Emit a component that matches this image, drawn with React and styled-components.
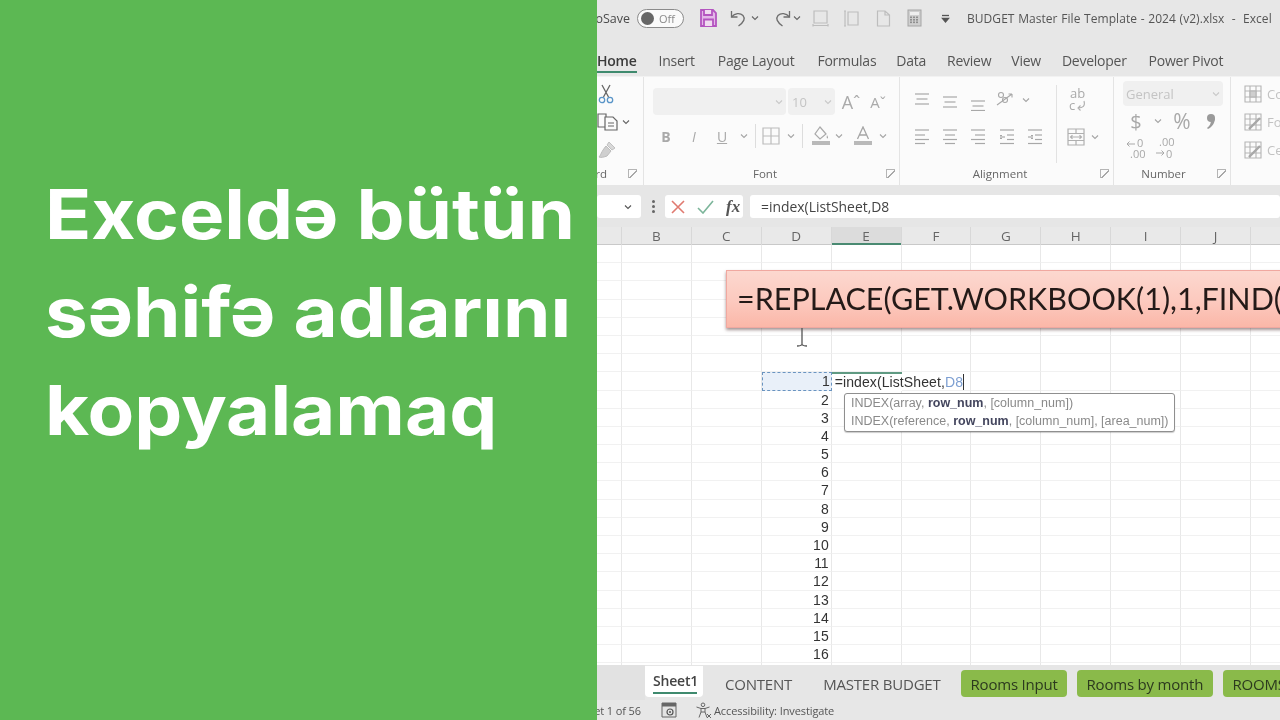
import React from "react";
import styled, { createGlobalStyle } from "styled-components";

const Global = createGlobalStyle`
  html, body { margin: 0; padding: 0; width: 1280px; height: 720px; overflow: hidden; background: #fff; }
  #root { width: 1280px; height: 720px; }
`;

const Page = styled.div`
  display: flex;
  width: 1280px;
  height: 720px;
  overflow: hidden;
`;
const Cover = styled.section`
  width: 597px;
  flex: none;
  background: #5cb853;
  padding: 165px 0 0 45px;
  box-sizing: border-box;
  overflow: hidden;
`;
const Heading = styled.h1`
  margin: 0;
  color: #fff;
  font-family: Inter, "Noto Sans", sans-serif;
  font-weight: 700;
  font-size: 69px;
  line-height: 98px;
  letter-spacing: 0;
  white-space: nowrap;
  transform: scaleX(1.105);
  transform-origin: left center;
`;
const Excel = styled.section`
  position: relative;
  width: 683px;
  height: 720px;
  flex: none;
  display: flex;
  flex-direction: column;
  overflow: hidden;
  background: #e7e7e7;
  color: #4a4a4a;
  font-family: "Open Sans", "Noto Sans", sans-serif;
  filter: blur(0.4px);
`;
const TitleBar = styled.div`
  height: 36px;
  flex: none;
  display: flex;
  align-items: center;
  font-size: 12.5px;
  white-space: nowrap;
`;
const ClipEnd = styled.div`
  width: ${p => p.$w}px;
  flex: none;
  display: flex;
  justify-content: flex-end;
  overflow: hidden;
  white-space: nowrap;
  color: ${p => p.$c || "inherit"};
`;
const Toggle = styled.div`
  margin-left: 7px;
  width: 47px;
  height: 19px;
  box-sizing: border-box;
  border: 1.5px solid #8b8b8b;
  border-radius: 10px;
  background: #fafafa;
  display: flex;
  align-items: center;
  gap: 5px;
  padding-left: 3px;
  font-size: 11px;
  color: #8a8a8a;
`;
const Knob = styled.span`
  width: 13px;
  height: 13px;
  border-radius: 50%;
  background: #666;
`;
const Tool = styled.div`
  width: ${p => p.$w}px;
  height: 100%;
  flex: none;
  margin-left: ${p => p.$ml || 0}px;
  display: flex;
  align-items: center;
  justify-content: center;
  color: ${p => p.$c || "#a9a9a9"};
  font-size: ${p => p.$fs || 14}px;
  font-weight: ${p => p.$fw || 400};
  font-style: ${p => p.$it ? "italic" : "normal"};
  text-decoration: ${p => p.$un ? "underline" : "none"};
`;
const TitleText = styled.span`
  margin-left: 17px;
  font-size: 12px;
  letter-spacing: 0.05px;
  color: #555;
  word-spacing: 0.5px;
  white-space: pre;
`;
const TabBar = styled.nav`
  height: 40px;
  flex: none;
  display: flex;
  align-items: flex-start;
  padding-top: 14px;
  box-sizing: border-box;
  font-size: 14px;
  letter-spacing: -0.25px;
  color: #555;
`;
const MenuTab = styled.span`
  flex: none;
  margin-left: ${p => p.$ml || 0}px;
  height: 21px;
  line-height: 21px;
  font-weight: ${p => p.$on ? 600 : 400};
  color: ${p => p.$on ? "#3b3b3b" : "#555"};
  border-bottom: ${p => p.$on ? "2px solid #3f8a6e" : "none"};
`;
const Ribbon = styled.div`
  height: 109px;
  flex: none;
  display: flex;
  background: #fbfbfb;
  border-top: 1px solid #f2f2f2;
  box-sizing: border-box;
  overflow: hidden;
`;
const Group = styled.div`
  position: relative;
  width: ${p => p.$w}px;
  flex: none;
  box-sizing: border-box;
  padding-top: ${p => p.$pt || 0}px;
  display: flex;
  flex-direction: column;
  gap: ${p => p.$gap || 0}px;
  border-right: ${p => p.$open ? "none" : "1px solid #e4e4e4"};
`;
const Row = styled.div`
  height: ${p => p.$h}px;
  flex: none;
  display: flex;
  padding-left: ${p => p.$pl || 0}px;
`;
const SelectBox = styled.div`
  width: ${p => p.$w}px;
  margin-left: ${p => p.$ml || 0}px;
  flex: none;
  box-sizing: border-box;
  background: #f0f0f0;
  border-radius: 4px;
  display: flex;
  align-items: center;
  justify-content: space-between;
  padding: 0 3px 0 ${p => p.$pl || 3}px;
  font-size: 13px;
  color: #c4c4c4;
`;
const GroupFoot = styled.div`
  margin-top: auto;
  height: 21px;
  flex: none;
  display: flex;
  align-items: center;
  font-size: 11.5px;
  color: #666;
  padding-bottom: 2px;
  box-sizing: border-box;
`;
const FootLabel = styled.span`
  flex: 1;
  text-align: center;
  padding-right: ${p => p.$pr || 0}px;
`;
const Launcher = styled.div`
  width: 9px;
  height: 9px;
  flex: none;
  margin-right: ${p => p.$mr || 4}px;
  border-left: 1px solid #b5b5b5;
  border-top: 1px solid #b5b5b5;
  box-sizing: border-box;
  display: flex;
  background: linear-gradient(135deg, transparent 45%, #a8a8a8 45%, #a8a8a8 60%, transparent 60%);
`;
const SplitGroup = styled.div`
  width: 214px;
  flex: none;
  position: relative;
  display: flex;
  flex-direction: column;
  box-sizing: border-box;
  border-right: 1px solid #e4e4e4;
`;
const SplitBody = styled.div`
  display: flex;
  height: 78px;
  padding-top: 8px;
  flex: none;
`;
const SplitCol = styled.div`
  width: ${p => p.$w}px;
  flex: none;
  display: flex;
  flex-direction: column;
  gap: 7px;
  border-right: ${p => p.$line ? "1px solid #e2e2e2" : "none"};
`;
const StyleItem = styled.div`
  height: 27px;
  flex: none;
  display: flex;
  align-items: center;
  gap: 5px;
  padding-left: 13px;
  font-size: 13px;
  color: #c2c2c2;
  white-space: nowrap;
`;
const FormulaRow = styled.div`
  height: 42px;
  flex: none;
  display: flex;
  padding-top: 10px;
  box-sizing: border-box;
  background: #e6e6e6;
`;
const WhiteBox = styled.div`
  height: 23px;
  width: ${p => p.$w ? `${p.$w}px` : "auto"};
  flex: ${p => p.$w ? "none" : 1};
  margin-left: ${p => p.$ml || 0}px;
  background: #fff;
  border-radius: 3px;
  display: flex;
  align-items: center;
  box-sizing: border-box;
  padding-left: ${p => p.$pl || 0}px;
  font-size: 13.9px;
  color: #444;
`;
const Dots = styled.div`
  margin-left: 11px;
  width: 3px;
  display: flex;
  flex-direction: column;
  justify-content: center;
  gap: 2px;
  height: 23px;
`;
const Dot = styled.span`
  width: 3px;
  height: 3px;
  border-radius: 50%;
  background: #666;
`;
const Fx = styled.span`
  font-family: "Liberation Serif", serif;
  font-style: italic;
  font-weight: 700;
  font-size: 17px;
  color: #555;
  margin-left: 12px;
`;
const ColumnHeads = styled.div`
  height: 18px;
  flex: none;
  display: grid;
  grid-template-columns: 25px repeat(10, 69.9px);
  background: #e9e9e9;
  border-bottom: 1px solid #c9c9c9;
  box-sizing: border-box;
`;
const ColHead = styled.div`
  text-align: center;
  line-height: 18px;
  font-size: 13.5px;
  color: #666;
  background: ${p => p.$on ? "#dcdcdc" : "transparent"};
  border-right: 1px solid #d8d8d8;
  box-shadow: ${p => p.$on ? "inset 0 -2px 0 #4a8a72" : "none"};
`;
const Sheet = styled.div`
  flex: 1;
  min-height: 0;
  overflow: hidden;
  background: #fff;
  display: grid;
  grid-template-columns: 25px repeat(10, 69.9px);
  grid-auto-rows: 18.2px;
`;
const Cell = styled.div`
  box-sizing: border-box;
  border-right: 1px solid #e8e8e8;
  border-bottom: 1px solid #f1f1f1;
  font-family: "Liberation Sans", Arial, sans-serif;
  font-size: 14px;
  line-height: 19px;
  color: #333;
  text-align: right;
  padding-right: 2px;
  white-space: nowrap;
`;
const CopiedCell = styled(Cell)`
  border: 1.5px dashed #6a94c0;
  background: #e9f0f9;
  line-height: 16px;
  padding-right: 1px;
`;
const EditCell = styled(Cell)`
  position: relative;
  z-index: 1;
  text-align: left;
  padding-left: 3px;
  border-top: 2px solid #5f9a82;
  border-bottom: none;
  border-right: none;
  line-height: 17px;
  overflow: visible;
  letter-spacing: 0.1px;
`;
const RefText = styled.span`
  color: #7d9fd2;
  border-right: 1px solid #333;
`;
const SheetTabs = styled.div`
  height: 35px;
  flex: none;
  display: flex;
  align-items: flex-start;
  background: #e6e6e6;
  font-size: 15px;
  color: #555;
  white-space: nowrap;
  letter-spacing: -0.2px;
`;
const TabGutter = styled.div`
  width: 48px;
  height: 35px;
  flex: none;
  background: #e2e2e2;
`;
const ActiveTab = styled.div`
  width: 58px;
  height: 31px;
  flex: none;
  margin-top: 1px;
  background: #fff;
  border-radius: 0 0 4px 4px;
  box-sizing: border-box;
  padding: 6px 6px 0 8px;
  font-weight: 600;
  color: #444;
  font-size: 14px;
`;
const ActiveInner = styled.div`
  height: 20px;
  line-height: 18px;
  border-bottom: 2px solid #3f8a6e;
`;
const PlainTab = styled.div`
  flex: none;
  margin-left: ${p => p.$ml}px;
  height: 35px;
  line-height: 39px;
`;
const GreenTab = styled.div`
  flex: none;
  width: ${p => p.$w}px;
  margin: 5px 0 0 ${p => p.$ml}px;
  height: 27px;
  line-height: 28px;
  background: #8aba4a;
  border-radius: 4px;
  box-sizing: border-box;
  padding-left: 10px;
  color: #2c3a1e;
`;
const StatusBar = styled.footer`
  height: 20px;
  flex: none;
  display: flex;
  align-items: center;
  font-size: 11px;
  letter-spacing: -0.1px;
  color: #555;
  white-space: nowrap;
`;
const StatusIcon = styled.div`
  flex: none;
  margin-left: ${p => p.$ml}px;
  display: flex;
`;
const Callout = styled.div`
  position: absolute;
  left: 129px;
  top: 270px;
  width: 640px;
  height: 58px;
  box-sizing: border-box;
  padding-left: 10px;
  background: linear-gradient(180deg, #fcd8cf 0%, #fcc9be 55%, #fbb7a8 100%);
  border: 1px solid #f0a8a0;
  box-shadow: 0 2px 3px rgba(90, 60, 60, 0.55);
  font-family: Lato, "Open Sans", sans-serif;
  font-size: 30.5px;
  line-height: 54px;
  color: #241a18;
  white-space: nowrap;
`;
const Hint = styled.div`
  position: absolute;
  left: 247px;
  top: 393px;
  width: 331px;
  height: 39px;
  box-sizing: border-box;
  background: #fff;
  border: 1px solid #8f8f8f;
  border-radius: 3px;
  box-shadow: 0 1px 1px rgba(0, 0, 0, 0.2);
  padding: 0 0 0 6px;
  font-family: "Liberation Sans", Arial, sans-serif;
  font-size: 12.5px;
  line-height: 18px;
  color: #8a8a8a;
  white-space: nowrap;
`;
const HintStrong = styled.b`
  color: #44465e;
`;
const Beam = styled.svg`
  position: absolute;
  left: 199px;
  top: 328px;
`;

const Svg = ({ w = 16, h = 16, children, stroke = "#a9a9a9", sw = 1.2, fill = "none" }) => (
  <svg width={w} height={h} viewBox={`0 0 ${w} ${h}`} fill={fill} stroke={stroke} strokeWidth={sw}>{children}</svg>
);
const Chev = ({ c = "#a5a5a5" }) => (
  <Svg w={8} h={6} stroke={c} sw={1.1}><path d="M1 1.5 4 4.5 7 1.5" /></Svg>
);
const Lines = ({ rows, stroke = "#a8a8a8" }) => (
  <Svg w={16} h={22} stroke={stroke}>
    {rows.map(([a, b, y], i) => <path key={i} d={`M${a} ${y}H${b}`} />)}
  </Svg>
);
const Save = () => (
  <svg width="17" height="18" viewBox="0 0 17 18" fill="none" stroke="#b455c0" strokeWidth="1.8">
    <path d="M1 1H13L16 4V17H1Z" fill="#e3b8e8" />
    <path d="M4 1V6H12V1M4 17V10.5H13V17" fill="#f0dcf0" />
  </svg>
);
const Undo = ({ flip }) => (
  <svg width="16" height="17" viewBox="0 0 16 17" fill="none" stroke="#6e6e6e" strokeWidth="1.3" style={flip ? { transform: "scaleX(-1)" } : undefined}>
    <path d="M1.5 1V7H7.5" />
    <path d="M1.5 7C5 3 10 2.5 13 5.5 15.5 8.5 14 12 8.5 16" />
  </svg>
);
const FrameH = () => (
  <Svg w={17} h={17} stroke="#bdbdbd"><path d="M2 1H15V13H2ZM1 15.5H16M1 14V16.5M16 14V16.5" /></Svg>
);
const FrameV = () => (
  <Svg w={17} h={17} stroke="#bdbdbd"><path d="M5 2H15V15H5ZM2 1V16M1 1H3M1 16H3" /></Svg>
);
const PageIcon = () => (
  <Svg w={15} h={17} stroke="#bdbdbd"><path d="M1.5 1H9L13.5 5V16H1.5ZM9 1V5H13.5" /></Svg>
);
const Calc = () => (
  <svg width="15" height="18" viewBox="0 0 15 18">
    <rect x="1" y="1" width="13" height="16" fill="#cfcfcf" stroke="#a5a5a5" />
    <rect x="3" y="3" width="9" height="3" fill="#efefef" />
    {[7.5, 10, 12.5].map(y => [3, 6, 9].map(x => <rect key={x + "-" + y} x={x} y={y} width="2" height="1.6" fill="#8f8f8f" />))}
  </svg>
);
const QuickMore = () => (
  <Svg w={9} h={9} stroke="#555" sw={1.3}><path d="M1 1.5H8" /><path d="M1.5 4.5H7.5L4.5 8Z" fill="#555" /></Svg>
);
const Scissors = () => (
  <svg width="16" height="20" viewBox="0 0 16 20" fill="none" strokeWidth="1.3">
    <path d="M4 1 10.5 13M12 1 5.5 13" stroke="#666" />
    <circle cx="4" cy="16" r="2.7" stroke="#5a95c8" />
    <circle cx="12" cy="16" r="2.7" stroke="#5a95c8" />
  </svg>
);
const CopyIcon = () => (
  <Svg w={21} h={18} stroke="#666" sw={1.2}>
    <path d="M1 1H9V14H1Z" />
    <path d="M8 4H16L20 8V17H8Z" fill="#fbfbfb" />
    <path d="M11 10H17M11 13H17" />
  </Svg>
);
const Brush = () => (
  <svg width="20" height="20" viewBox="0 0 20 20" fill="none">
    <path d="M12 2 18 8 15 10 10 5Z" fill="#d8d8d8" stroke="#c0c0c0" />
    <path d="M9 6 14 11 10 16C7 17 4 18 2 17 4 15 4 12 9 6Z" fill="#cfcfcf" stroke="#bcbcbc" />
  </svg>
);
const BorderIcon = () => (
  <Svg w={18} h={18} stroke="#bcbcbc"><path d="M1 1H17V17H1ZM9 1V17M1 9H17" /></Svg>
);
const FillIcon = () => (
  <svg width="18" height="20" viewBox="0 0 18 20" fill="none">
    <path d="M8 1 14 8 8 13 3 8Z" stroke="#aaa" strokeWidth="1.2" />
    <path d="M15 9C16 11 16.5 12 15.5 12.5 14.5 12.5 14.5 11 15 9Z" fill="#aaa" />
    <rect x="0" y="15" width="18" height="4" fill="#b9b9b9" />
  </svg>
);
const ColorA = () => (
  <svg width="18" height="20" viewBox="0 0 18 20" fill="none">
    <path d="M3.5 13 9 1 14.5 13M5.5 9H12.5" stroke="#a5a5a5" strokeWidth="1.3" />
    <rect x="0" y="15" width="18" height="4" fill="#b9b9b9" />
  </svg>
);
const Orient = () => (
  <svg width="20" height="18" viewBox="0 0 20 18" fill="none" stroke="#a8a8a8" strokeWidth="1.1">
    <path d="M1 14 16 3M16 3H12.5M16 3V6.5" />
    <circle cx="5" cy="4" r="2.5" />
    <circle cx="9" cy="9" r="2.5" />
  </svg>
);
const WrapIcon = () => (
  <svg width="20" height="26" viewBox="0 0 20 26" fill="none" stroke="#b0b0b0" strokeWidth="1.1">
    <text x="3" y="11" fontFamily="Open Sans, sans-serif" fontSize="13" fill="#aaa" stroke="none">ab</text>
    <text x="2" y="23" fontFamily="Open Sans, sans-serif" fontSize="13" fill="#aaa" stroke="none">c</text>
    <path d="M17 14C18.5 19 16 21 11 21M13.5 18.5 11 21 13.5 23.5" />
  </svg>
);
const MergeIcon = () => (
  <svg width="18" height="18" viewBox="0 0 18 18" fill="none" stroke="#b0b0b0" strokeWidth="1.2">
    <path d="M1 1H17V17H1ZM1 5.5H17M1 12.5H17M9 1V5.5M9 12.5V17" />
    <path d="M3.5 9H14.5M5.5 7.2 3.5 9 5.5 10.8M12.5 7.2 14.5 9 12.5 10.8" />
  </svg>
);
const StyleGlyph = ({ kind }) => (
  <svg width="18" height="18" viewBox="0 0 18 18" fill="none" stroke="#b5b5b5" strokeWidth="1.1" style={{ flex: "none" }}>
    <path d="M1 1H17V17H1ZM1 6H17M1 12H17M6 1V17M12 1V17" />
    {kind === 0 && <rect x="6" y="6" width="6" height="6" fill="#cfcfcf" />}
    {kind > 0 && <path d="M5 16 16 5" strokeWidth="2.4" stroke="#a8a8a8" />}
  </svg>
);
const DecInc = () => (
  <svg width="20" height="24" viewBox="0 0 20 24" fill="none" stroke="#a9a9a9" strokeWidth="1">
    <path d="M1 8H9M3.5 5.5 1 8 3.5 10.5" />
    <text x="11" y="11" fontFamily="Open Sans, sans-serif" fontSize="11" fill="#a9a9a9" stroke="none">0</text>
    <text x="4" y="22" fontFamily="Open Sans, sans-serif" fontSize="11" fill="#a9a9a9" stroke="none">.00</text>
  </svg>
);
const DecDec = () => (
  <svg width="20" height="24" viewBox="0 0 20 24" fill="none" stroke="#a9a9a9" strokeWidth="1">
    <text x="4" y="10" fontFamily="Open Sans, sans-serif" fontSize="11" fill="#a9a9a9" stroke="none">.00</text>
    <path d="M1 17H9M6.5 14.5 9 17 6.5 19.5" />
    <text x="11" y="22" fontFamily="Open Sans, sans-serif" fontSize="11" fill="#a9a9a9" stroke="none">0</text>
  </svg>
);
const CommaIcon = () => (
  <svg width="12" height="17" viewBox="0 0 12 17" fill="#9a9a9a">
    <circle cx="6" cy="5" r="4" />
    <path d="M10 5C10 10 7 14 3 16L2 15C5 13 6 10 6 7Z" />
  </svg>
);
const Camera = () => (
  <svg width="16" height="16" viewBox="0 0 16 16" fill="none">
    <path d="M1 1H15V15H1Z" fill="#e4e4e4" stroke="#666" />
    <rect x="1" y="1" width="14" height="3.5" fill="#666" />
    <circle cx="9" cy="10" r="3" stroke="#555" strokeWidth="1.2" />
    <circle cx="9" cy="10" r="1" fill="#555" />
  </svg>
);
const Access = () => (
  <svg width="17" height="17" viewBox="0 0 17 17" fill="none" stroke="#666" strokeWidth="1">
    <circle cx="8" cy="2.8" r="1.8" />
    <path d="M1.5 5 6 6.5H10L14.5 5M6 6.5V10L4 15.5M10 6.5V10L12 15.5M6 10H10" />
    <path d="M12 12 16 16M16 12 12 16" />
  </svg>
);
const Cross = () => (
  <Svg w={14} h={14} stroke="#e07a70" sw={1.6}><path d="M1 1 13 13M13 1 1 13" /></Svg>
);
const Check = () => (
  <Svg w={17} h={14} stroke="#7cb59a" sw={1.6}><path d="M1 8 6 13 16 1" /></Svg>
);

const MENU = [
  ["Insert", 22], ["Page Layout", 23], ["Formulas", 23], ["Data", 20], ["Review", 21],
  ["View", 20], ["Developer", 21], ["Power Pivot", 22],
];
const COLS = ["", "B", "C", "D", "E", "F", "G", "H", "I", "J", ""];
const FIRST_NUMBER_ROW = 7;

function SheetBody() {
  const cells = [];
  for (let r = 0; r < 24; r++) {
    const n = r - FIRST_NUMBER_ROW + 1;
    for (let c = 0; c < COLS.length; c++) {
      const key = `${r}-${c}`;
      if (n === 1 && c === 3) cells.push(<CopiedCell key={key}>1</CopiedCell>);
      else if (n === 1 && c === 4) cells.push(<EditCell key={key}>=index(ListSheet,<RefText>D8</RefText></EditCell>);
      else cells.push(<Cell key={key}>{c === 3 && n >= 1 && n <= 16 ? n : ""}</Cell>);
    }
  }
  return <Sheet>{cells}</Sheet>;
}

export default function App() {
  return (
    <Page>
      <Global />
      <Cover>
        <Heading>Exceldə bütün<br />səhifə adlarını<br />kopyalamaq</Heading>
      </Cover>
      <Excel>
        <TitleBar>
          <ClipEnd $w={33}>AutoSave</ClipEnd>
          <Toggle><Knob />Off</Toggle>
          <Tool $w={17} $ml={16}><Save /></Tool>
          <Tool $w={16} $ml={13}><Undo /></Tool>
          <Tool $w={10} $ml={4}><Chev c="#666" /></Tool>
          <Tool $w={16} $ml={15}><Undo flip /></Tool>
          <Tool $w={10} $ml={1}><Chev c="#666" /></Tool>
          <Tool $w={17} $ml={10}><FrameH /></Tool>
          <Tool $w={17} $ml={14}><FrameV /></Tool>
          <Tool $w={15} $ml={16}><PageIcon /></Tool>
          <Tool $w={15} $ml={16}><Calc /></Tool>
          <Tool $w={9} $ml={19}><QuickMore /></Tool>
          <TitleText>BUDGET Master File Template - 2024 (v2).xlsx  -  Excel</TitleText>
        </TitleBar>
        <TabBar>
          <MenuTab $on>Home</MenuTab>
          {MENU.map(([t, ml]) => <MenuTab key={t} $ml={ml}>{t}</MenuTab>)}
        </TabBar>
        <Ribbon>
          <Group $w={47} $pt={3} $gap={1}>
            <Row $h={27} $pl={1}><Tool $w={16}><Scissors /></Tool></Row>
            <Row $h={27}><Tool $w={21}><CopyIcon /></Tool><Tool $w={10} $ml={3}><Chev c="#666" /></Tool></Row>
            <Row $h={27}><Tool $w={20}><Brush /></Tool></Row>
            <GroupFoot>
              <ClipEnd $w={10}>Clipboard</ClipEnd>
              <FootLabel />
              <Launcher $mr={6} />
            </GroupFoot>
          </Group>
          <Group $w={256} $pt={11} $gap={7}>
            <Row $h={27} $pl={9}>
              <SelectBox $w={133}><span /><Chev c="#c9c9c9" /></SelectBox>
              <SelectBox $w={47} $ml={2} $pl={4}>10<Chev c="#c9c9c9" /></SelectBox>
              <Tool $w={20} $ml={6} $fs={18} $c="#aaa">Aˆ</Tool>
              <Tool $w={18} $ml={8} $fs={15} $c="#aaa">Aˇ</Tool>
            </Row>
            <Row $h={28} $pl={12}>
              <Tool $w={20} $fw={700} $fs={14}>B</Tool>
              <Tool $w={20} $ml={8} $it $fs={14}>I</Tool>
              <Tool $w={20} $ml={8} $un $fs={14}>U</Tool>
              <Tool $w={10} $ml={7}><Chev /></Tool>
              <Tool $w={1} $ml={6} $c="#ddd"><Svg w={1} h={24} stroke="#ddd" sw={2}><path d="M0.5 0V24" /></Svg></Tool>
              <Tool $w={18} $ml={6}><BorderIcon /></Tool>
              <Tool $w={10} $ml={6}><Chev /></Tool>
              <Tool $w={1} $ml={6}><Svg w={1} h={24} stroke="#ddd" sw={2}><path d="M0.5 0V24" /></Svg></Tool>
              <Tool $w={18} $ml={9}><FillIcon /></Tool>
              <Tool $w={10} $ml={4}><Chev /></Tool>
              <Tool $w={18} $ml={10}><ColorA /></Tool>
              <Tool $w={10} $ml={6}><Chev /></Tool>
            </Row>
            <GroupFoot>
              <FootLabel>Font</FootLabel>
              <Launcher />
            </GroupFoot>
          </Group>
          <SplitGroup>
            <SplitBody>
              <SplitCol $w={156} $line>
                <Row $h={30} $pl={14}>
                  <Tool $w={16}><Lines rows={[[1, 15, 5], [2.5, 13.5, 10], [1, 15, 15]]} /></Tool>
                  <Tool $w={16} $ml={12}><Lines rows={[[1, 15, 8], [2.5, 13.5, 13], [1, 15, 18]]} /></Tool>
                  <Tool $w={16} $ml={12}><Lines rows={[[1, 15, 12], [2.5, 13.5, 17], [1, 15, 21.5]]} /></Tool>
                  <Tool $w={20} $ml={10}><Orient /></Tool>
                  <Tool $w={10} $ml={5}><Chev /></Tool>
                </Row>
                <Row $h={30} $pl={14}>
                  <Tool $w={16}><Lines rows={[[1, 15, 4], [1, 11, 9], [1, 15, 13.5], [1, 11, 17.5]]} /></Tool>
                  <Tool $w={16} $ml={12}><Lines rows={[[1, 15, 4], [3, 13, 9], [1, 15, 13.5], [3, 13, 17.5]]} /></Tool>
                  <Tool $w={16} $ml={12}><Lines rows={[[1, 15, 4], [5, 15, 9], [1, 15, 13.5], [5, 15, 17.5]]} /></Tool>
                  <Tool $w={16} $ml={13}><Lines rows={[[1, 15, 4], [8, 15, 9], [8, 15, 13.5], [1, 15, 17.5], [1, 6, 11], [1, 3, 9.5], [1, 3, 12.5]]} /></Tool>
                  <Tool $w={16} $ml={12}><Lines rows={[[1, 15, 4], [8, 15, 9], [8, 15, 13.5], [1, 15, 17.5], [1, 6, 11], [4, 6, 9.5], [4, 6, 12.5]]} /></Tool>
                </Row>
              </SplitCol>
              <SplitCol $w={57}>
                <Row $h={30} $pl={10}><Tool $w={20}><WrapIcon /></Tool></Row>
                <Row $h={30} $pl={10}><Tool $w={18}><MergeIcon /></Tool><Tool $w={10} $ml={5}><Chev /></Tool></Row>
              </SplitCol>
            </SplitBody>
            <GroupFoot>
              <FootLabel>Alignment</FootLabel>
              <Launcher />
            </GroupFoot>
          </SplitGroup>
          <Group $w={117} $pt={4} $gap={3}>
            <Row $h={25} $pl={9}>
              <SelectBox $w={100} $pl={3}>General<Chev c="#c9c9c9" /></SelectBox>
            </Row>
            <Row $h={24} $pl={13}>
              <Tool $w={18} $fs={20}>$</Tool>
              <Tool $w={10} $ml={8}><Chev /></Tool>
              <Tool $w={24} $ml={7} $fs={21}>%</Tool>
              <Tool $w={12} $ml={11}><CommaIcon /></Tool>
            </Row>
            <Row $h={24} $pl={12}>
              <Tool $w={20}><DecInc /></Tool>
              <Tool $w={20} $ml={9}><DecDec /></Tool>
            </Row>
            <GroupFoot>
              <FootLabel $pr={4}>Number</FootLabel>
              <Launcher />
            </GroupFoot>
          </Group>
          <Group $w={60} $pt={3} $gap={1} $open>
            <StyleItem><StyleGlyph kind={0} />Conditional Formatting</StyleItem>
            <StyleItem><StyleGlyph kind={1} />Format as Table</StyleItem>
            <StyleItem><StyleGlyph kind={2} />Cell Styles</StyleItem>
          </Group>
        </Ribbon>
        <FormulaRow>
          <WhiteBox $w={44} $pl={27}><Chev c="#555" /></WhiteBox>
          <Dots><Dot /><Dot /><Dot /></Dots>
          <WhiteBox $w={78} $ml={10} $pl={6}>
            <Cross />
            <Tool $w={17} $ml={12}><Check /></Tool>
            <Fx>fx</Fx>
          </WhiteBox>
          <WhiteBox $ml={7} $pl={11}>=index(ListSheet,D8</WhiteBox>
        </FormulaRow>
        <ColumnHeads>
          {COLS.map((c, i) => <ColHead key={i} $on={c === "E"}>{c}</ColHead>)}
        </ColumnHeads>
        <SheetBody />
        <SheetTabs>
          <TabGutter />
          <ActiveTab><ActiveInner>Sheet1</ActiveInner></ActiveTab>
          <PlainTab $ml={22}>CONTENT</PlainTab>
          <PlainTab $ml={31}>MASTER BUDGET</PlainTab>
          <GreenTab $w={106} $ml={20}>Rooms Input</GreenTab>
          <GreenTab $w={136} $ml={10}>Rooms by month</GreenTab>
          <GreenTab $w={100} $ml={10}>ROOMS</GreenTab>
        </SheetTabs>
        <StatusBar>
          <ClipEnd $w={44}>Sheet 1 of 56</ClipEnd>
          <StatusIcon $ml={20}><Camera /></StatusIcon>
          <StatusIcon $ml={18}><Access /></StatusIcon>
          <StatusIcon $ml={2}>Accessibility: Investigate</StatusIcon>
        </StatusBar>
        <Callout>=REPLACE(GET.WORKBOOK(1),1,FIND(</Callout>
        <Beam width="12" height="20" viewBox="0 0 12 20" fill="none" stroke="#555" strokeWidth="1.3">
          <path d="M6 0V17M1 18C3 18 5 18 6 16.5 7 18 9 18 11 18" />
        </Beam>
        <Hint>
          INDEX(array, <HintStrong>row_num</HintStrong>, [column_num])<br />
          INDEX(reference, <HintStrong>row_num</HintStrong>, [column_num], [area_num])
        </Hint>
      </Excel>
    </Page>
  );
}
